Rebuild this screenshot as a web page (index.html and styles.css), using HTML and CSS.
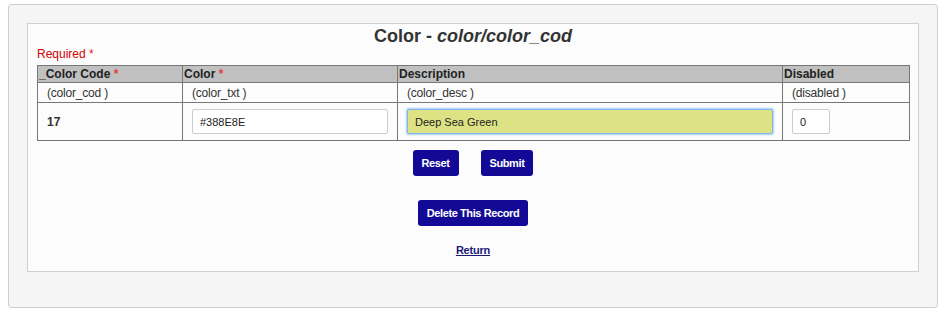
FILE: index.html
```html
<!DOCTYPE html>
<html lang="en">
<head>
<meta charset="UTF-8" />
<title>Color - color/color_cod</title>
<link rel="stylesheet" href="styles.css">
</head>
<body>

<div class="page">
 <div class="panel">
   <h2 class="title">Color - <i>color/color_cod</i></h2>
   <div class="required">Required <span class="star">*</span></div>

   <form class="record">
     <table class="grid">
       <colgroup>
         <col class="c1"><col class="c2"><col class="c3"><col class="c4">
       </colgroup>
       <tr class="head">
         <th>_Color Code <span class="star">*</span></th>
         <th>Color <span class="star">*</span></th>
         <th>Description</th>
         <th>Disabled</th>
       </tr>
       <tr class="names">
         <td>(color_cod )</td>
         <td>(color_txt )</td>
         <td>(color_desc )</td>
         <td>(disabled )</td>
       </tr>
       <tr class="values">
         <td class="key">17</td>
         <td><input type="text" class="field" value="#388E8E"></td>
         <td><input type="text" class="field focused" value="Deep Sea Green"></td>
         <td><input type="text" class="field small" value="0"></td>
       </tr>
     </table>

     <div class="actions">
       <button type="reset" class="btn">Reset</button>
       <button type="button" class="btn">Submit</button>
     </div>
     <div class="actions del">
       <button type="button" class="btn">Delete This Record</button>
     </div>
   </form>

   <div class="back"><a href="#">Return</a></div>
 </div>
</div>

</body>
</html>
```

FILE: styles.css
```css
/* base */
body {
  margin: 4px 6px 4px 8px;
  font-family: "Liberation Sans", Arial, sans-serif;
  font-size: 12px;
  color: #222;
  background: #fff;
}

/* outer grey box */
.page {
  background: #f5f5f5;
  border: 1px solid #cfcfcf;
  border-radius: 3px;
  padding: 18px 18px 36px 18px;
  height: 248px;
}

/* inner white panel */
.panel {
  background: #fcfcfc;
  border: 1px solid #d0d0d0;
  padding: 1px 9px 0 9px;
  height: 246px;
}

.title {
  margin: 0;
  text-align: center;
  font-size: 18px;
  line-height: 22px;
  color: #333;
}

.required {
  color: #d40000;
  font-size: 12px;
  line-height: 14px;
}
.star {
  color: #e0201b;
}
th .star { color: #e04040; }

/* table */
.grid {
  width: 872px;
  margin-top: 4px;
  border-collapse: collapse;
  table-layout: fixed;
}
.c1 { width: 145px; }
.c2 { width: 215px; }
.c3 { width: 385px; }
.c4 { width: 127px; }

.grid th, .grid td {
  border: 1px solid #777;
}
.grid th {
  background: #c0c0c0;
  text-align: left;
  font-size: 12px;
  font-weight: bold;
  color: #222;
  padding: 0 1px;
  height: 16px;
  line-height: 16px;
}
.names td {
  height: 19px;
  padding: 0 9px;
  font-size: 12px;
  letter-spacing: -0.2px;
  color: #333;
}
.values td {
  height: 38px;
  padding: 0 9px;
  box-sizing: border-box;
}
.key {
  font-weight: bold;
  font-size: 12px;
  color: #333;
}

.field {
  box-sizing: border-box;
  width: 100%;
  height: 25px;
  border: 1px solid #ccc;
  border-radius: 2px;
  background: #fff;
  padding: 0 7px;
  font-family: "Liberation Sans", Arial, sans-serif;
  font-size: 11px;
  color: #222;
}
.field.focused {
  background: #dde385;
  border: 1px solid #7fb6ec;
  box-shadow: 0 0 2px 1px #a8cdf3;
  outline: none;
}
.field.small {
  width: 38px;
}

/* buttons */
.actions {
  display: flex;
  justify-content: center;
  gap: 22px;
  margin-top: 9px;
}
.actions.del {
  margin-top: 24px;
}
.btn {
  background: #120a96;
  color: #fff;
  border: none;
  border-radius: 3px;
  height: 26px;
  padding: 0 9px;
  font-family: "Liberation Sans", Arial, sans-serif;
  font-size: 11px;
  letter-spacing: -0.4px;
  font-weight: bold;
  cursor: pointer;
}

.back {
  text-align: center;
  margin-top: 17px;
}
.back a {
  color: #1c1a78;
  font-weight: bold;
  font-size: 11px;
  letter-spacing: -0.2px;
}
```
